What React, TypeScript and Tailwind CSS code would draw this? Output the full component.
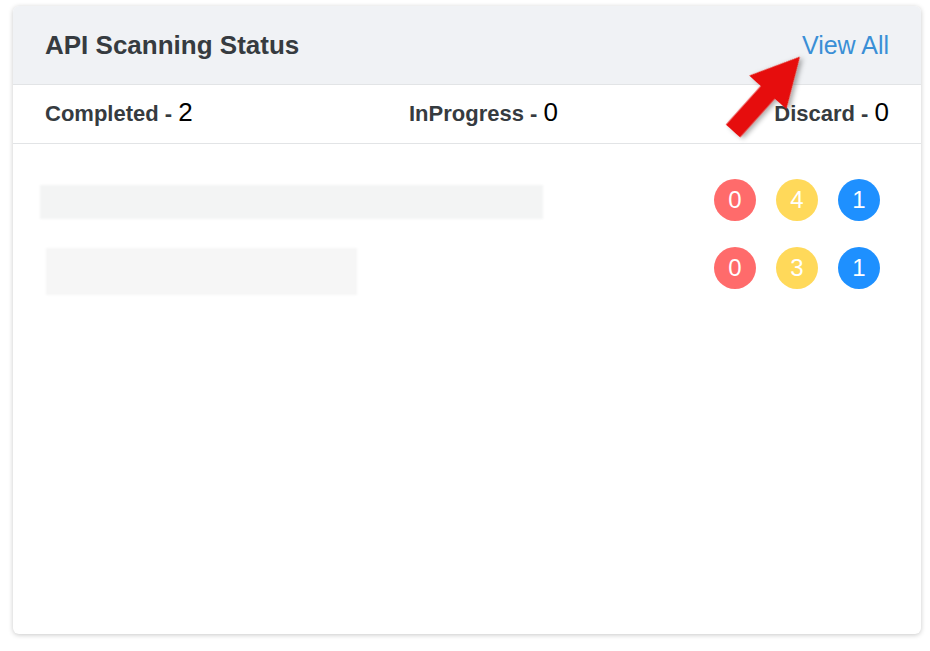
import React from 'react';

const stats = [
  { label: 'Completed', value: 2 },
  { label: 'InProgress', value: 0 },
  { label: 'Discard', value: 0 },
];

const rows = [
  { bar: 'ml-[-5px] mt-[4px] w-[503px] h-[34px] bg-[#f3f4f4]', counts: [0, 4, 1] },
  { bar: 'ml-[1px] mt-[6px] w-[311px] h-[47px] bg-[#f6f6f6]', counts: [0, 3, 1] },
];

const dotColors = ['bg-[#ff6b6b]', 'bg-[#ffd95a]', 'bg-[#1e90ff]'];

const App: React.FC = () => {
  return (
    <div className="relative w-[930px] h-[651px] bg-white pl-[13px] pt-[6px]" style={{ fontFamily: '"Liberation Sans", Arial, sans-serif' }}>
      <div className="w-[908px] h-[628px] rounded-md bg-white shadow-[0_1px_5px_rgba(0,0,0,0.22)] overflow-hidden">
        {/* Header */}
        <div className="h-[79px] bg-[#f0f2f5] border-b border-[#e2e4e6] flex items-center justify-between px-8">
          <h2 className="text-[26px] font-bold text-[#363b40] leading-none">API Scanning Status</h2>
          <a className="text-[25px] text-[#3a8fd6] leading-none">View All</a>
        </div>

        {/* Stats */}
        <div className="h-[59px] border-b border-[#e2e4e6] flex items-center justify-between px-8 pb-[4px]">
          {stats.map((s) => (
            <div key={s.label} className="flex items-baseline leading-none">
              <span className="text-[22px] font-bold text-[#363b40]">{s.label} -&nbsp;</span>
              <span className="text-[26px] text-black">{s.value}</span>
            </div>
          ))}
        </div>

        {/* Rows */}
        <div className="pt-[32px] pl-8 pr-[41px] flex flex-col gap-[20px]">
          {rows.map((r, idx) => (
            <div key={idx} className="flex items-center justify-between h-[48px]">
              <div className={`${r.bar} blur-[1px]`} />
              <div className="flex gap-[20px]">
                {r.counts.map((c, j) => (
                  <span
                    key={j}
                    className={`w-[42px] h-[42px] rounded-full ${dotColors[j]} text-white text-[24px] flex items-center justify-center`}
                  >
                    {c}
                  </span>
                ))}
              </div>
            </div>
          ))}
        </div>
      </div>

      {/* Red annotation arrow */}
      <svg className="absolute left-0 top-0 pointer-events-none" width="930" height="651">
        <defs>
          <filter id="arrowShadow" x="-20%" y="-20%" width="140%" height="140%">
            <feDropShadow dx="1" dy="3" stdDeviation="2.5" floodColor="#000" floodOpacity="0.35" />
          </filter>
        </defs>
        <g transform="translate(733 131) rotate(-48)" filter="url(#arrowShadow)">
          <polygon points="0,-9.5 52,-9.5 52,-25 100,0 52,25 52,9.5 0,9.5" fill="#e60c07" />
        </g>
      </svg>
    </div>
  );
};

export default App;
